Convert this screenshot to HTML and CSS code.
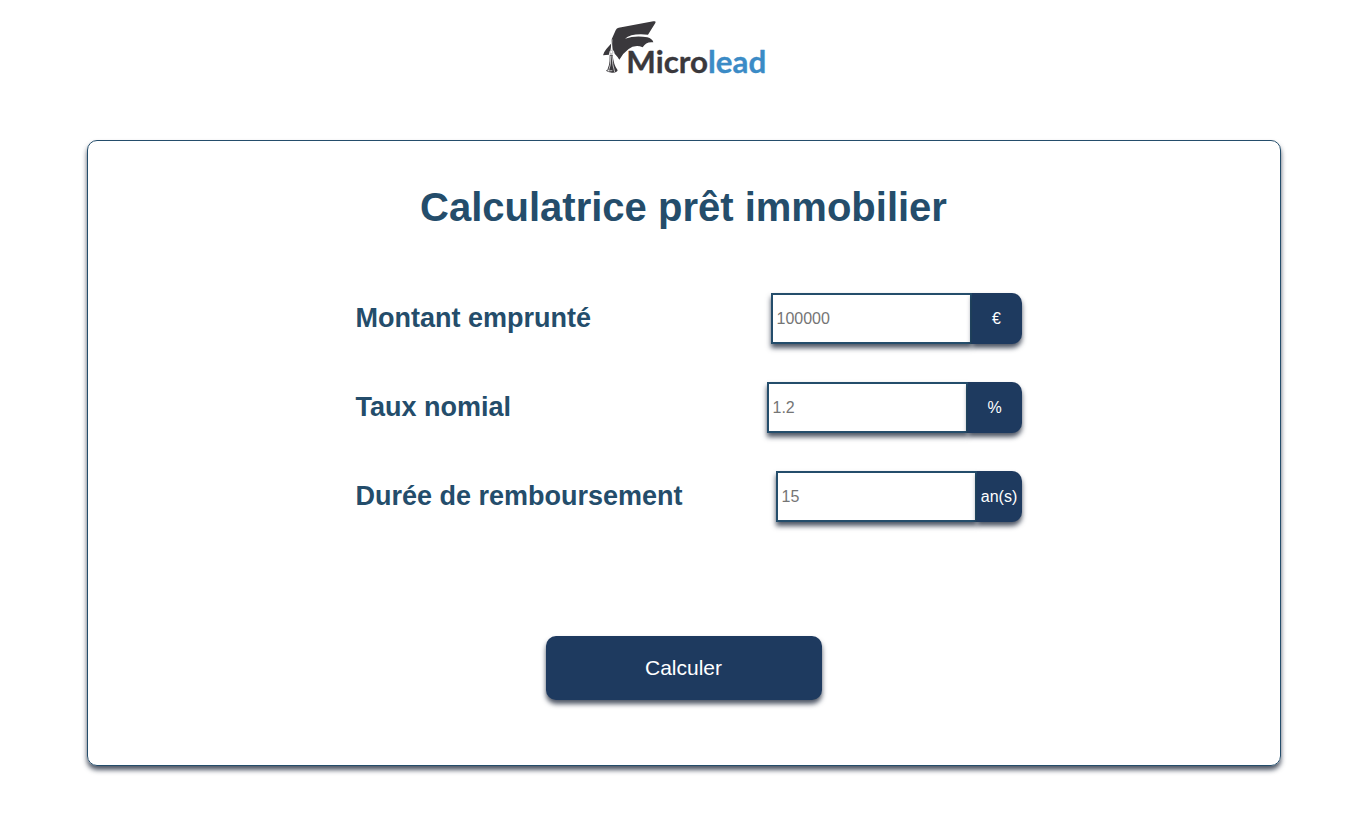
FILE: index.html
```html
<!DOCTYPE html>
<html lang="fr">
<head>
<meta charset="utf-8">
<title>Calculatrice prêt immobilier</title>
<meta name="viewport" content="width=device-width, initial-scale=1">
<link rel="stylesheet" href="styles.css">
</head>
<body>
<header class="header">
  <svg class="logo" viewBox="33 30 495 165" role="img" aria-label="Microlead">
    <path class="logo-dark" d="M86 53L190 34Q200 32 196 39L174 74Q124 69 105 86Q137 75 172 82Q187 86 190 97Q168 94 158 112Q121 96 88 149Q82 139 74 131Q73 122 68 119L65 92L62 119Q57 124 57 134L39 136Q43 124 49 117L63 101L65 88L77 61Q80 54 86 53Z"/>
    <path class="logo-line" d="M66 88L64 122"/>
    <circle class="logo-bead" cx="64" cy="126" r="5"/>
    <path class="logo-dark" d="M59 134H68Q70 163 83 181Q80 189 66 188Q53 187 48 182Q60 174 59 134Z"/>
    <path class="logo-line" d="M62 137Q64 165 55 185M66 137Q67 166 74 186M48 178Q58 185 67 182"/>
    <text class="logo-text" x="109" y="188">Micro<tspan class="logo-blue">lead</tspan></text>
  </svg>
</header>
<main class="card">
  <h1 class="title">Calculatrice prêt immobilier</h1>
  <form class="form">
    <div class="row">
      <label class="label" for="montant">Montant emprunté</label>
      <div class="field"><input class="input" id="montant" type="text" placeholder="100000"><span class="unit">€</span></div>
    </div>
    <div class="row">
      <label class="label" for="taux">Taux nomial</label>
      <div class="field"><input class="input" id="taux" type="text" placeholder="1.2"><span class="unit unit-rate">%</span></div>
    </div>
    <div class="row">
      <label class="label" for="duree">Durée de remboursement</label>
      <div class="field"><input class="input" id="duree" type="text" placeholder="15"><span class="unit unit-long">an(s)</span></div>
    </div>
    <button class="submit" type="button">Calculer</button>
  </form>
</main>
</body>
</html>
```

FILE: styles.css
```css
* {
  box-sizing: border-box;
}

body {
  margin: 0;
  background: #fff;
  color: #244d6b;
  font-family: "Liberation Sans", Arial, sans-serif;
}

.header {
  display: flex;
  justify-content: center;
  padding: 20px 0 65px;
}

.logo {
  display: block;
  width: 165px;
  height: 55px;
  overflow: visible;
}

.logo-dark {
  fill: #3a383c;
}

.logo-line {
  fill: none;
  stroke: #fff;
  stroke-width: 2;
}

.logo-bead {
  fill: #fff;
  stroke: #3a383c;
  stroke-width: 1;
}

.logo-text {
  fill: #3a383c;
  stroke: #3a383c;
  stroke-width: 1;
  stroke-linejoin: round;
  font: 700 94px Lato, sans-serif;
}

.logo-blue {
  fill: #3b8bc6;
  stroke: #3b8bc6;
}

.card {
  max-width: 1194px;
  margin: 0 auto 60px;
  padding: 42px 24px 65px;
  border: 1px solid #244d6b;
  border-radius: 10px;
  box-shadow: 0 4px 5px rgba(20, 31, 51, 0.75);
}

.title {
  margin: 0 0 62px;
  font-size: 40px;
  line-height: 48px;
  text-align: center;
}

.form {
  display: flex;
  flex-direction: column;
  gap: 38px;
  max-width: 676px;
  margin: 0 auto;
}

.row {
  display: flex;
  align-items: center;
  justify-content: space-between;
  padding-left: 10px;
}

.label {
  font-size: 27px;
  font-weight: 700;
}

.field {
  display: flex;
  height: 51px;
}

.input {
  width: 201px;
  padding: 0 4px;
  border: 2px solid #244d6b;
  border-radius: 0;
  background: #fff;
  box-shadow: 0 4px 5px rgba(20, 31, 51, 0.75);
  font: 16px "Liberation Sans", Arial, sans-serif;
}

.input::placeholder {
  color: #757575;
}

.unit {
  display: flex;
  align-items: center;
  justify-content: center;
  min-width: 50px;
  border-radius: 0 10px 10px 0;
  background: #1e3a5f;
  box-shadow: 0 4px 5px rgba(20, 31, 51, 0.75);
  color: #fff;
  font-size: 16px;
}

.unit-rate {
  min-width: 54px;
}

.unit-long {
  min-width: 45px;
}

.submit {
  align-self: center;
  width: 276px;
  height: 64px;
  margin-top: 76px;
  border: 0;
  border-radius: 10px;
  background: #1e3a5f;
  box-shadow: 0 4px 5px rgba(20, 31, 51, 0.75);
  color: #fff;
  font: 21px "Liberation Sans", Arial, sans-serif;
}
```
